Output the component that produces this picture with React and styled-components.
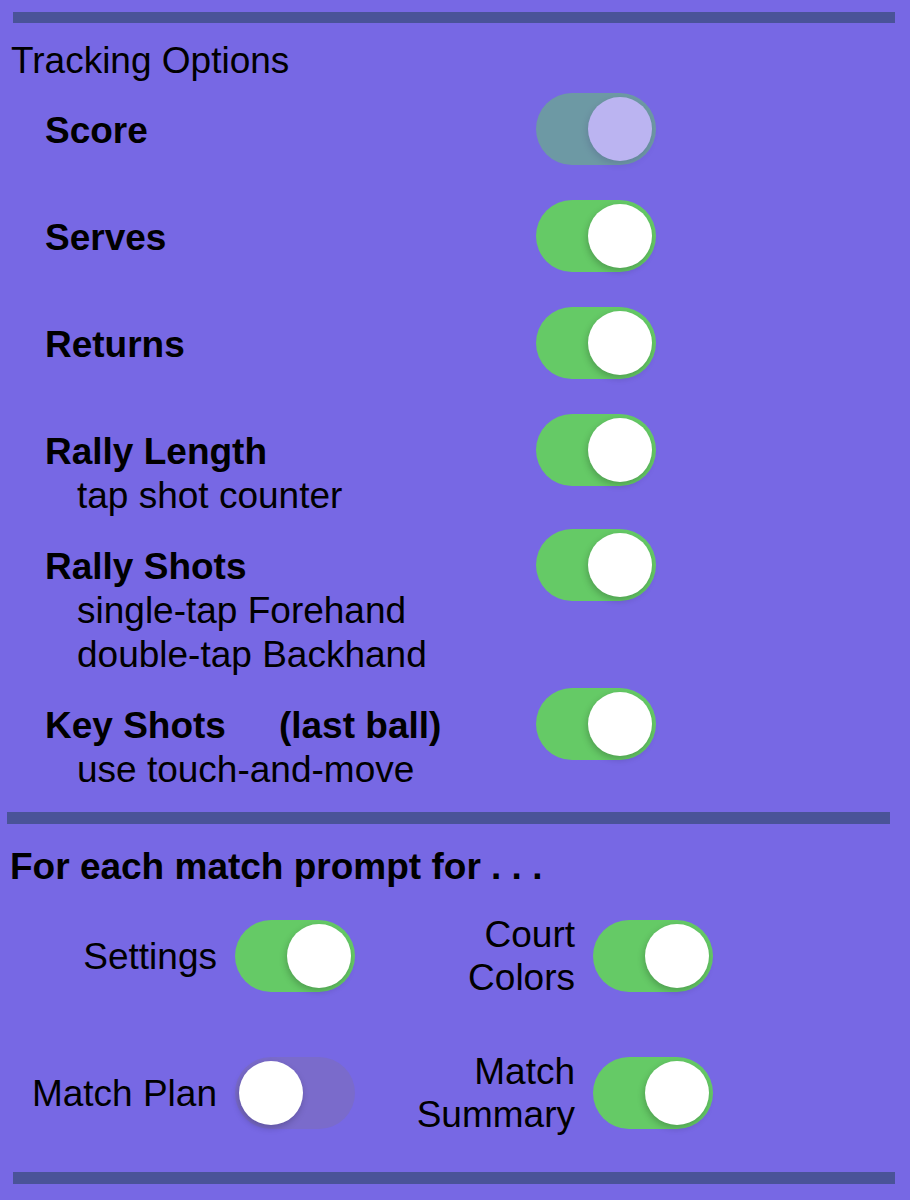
import React from 'react';
import styled, { createGlobalStyle } from 'styled-components';

const trackingOptions = [
  { title: 'Score', on: true, dim: true },
  { title: 'Serves', on: true },
  { title: 'Returns', on: true },
  { title: 'Rally Length', notes: ['tap shot counter'], on: true },
  { title: 'Rally Shots', notes: ['single-tap Forehand', 'double-tap Backhand'], on: true },
  { title: 'Key Shots', aside: '(last ball)', notes: ['use touch-and-move'], on: true },
];

const prompts = [
  { label: ['Settings'], on: true },
  { label: ['Court', 'Colors'], on: true },
  { label: ['Match Plan'], on: false },
  { label: ['Match', 'Summary'], on: true },
];

const Switch = ({ on, dim }) => (
  <Track $on={on} $dim={dim}>
    <Knob $on={on} />
  </Track>
);

const App = () => {
  return (
    <>
      <GlobalStyle />
      <Page>
        <Divider $left={13} $right={15} $height={11} />
        <SectionTitle>Tracking Options</SectionTitle>

        <OptionList>
          {trackingOptions.map((opt) => (
            <OptionRow key={opt.title}>
              <OptionText>
                <OptionTitle>
                  {opt.title}
                  {opt.aside && <Aside>{opt.aside}</Aside>}
                </OptionTitle>
                {opt.notes?.map((note) => (
                  <Note key={note}>{note}</Note>
                ))}
              </OptionText>
              <SwitchSlot>
                <Switch on={opt.on} dim={opt.dim} />
              </SwitchSlot>
            </OptionRow>
          ))}
        </OptionList>

        <Divider $left={7} $right={20} $height={12} $top={9} />
        <PromptTitle>For each match prompt for . . .</PromptTitle>

        <PromptGrid>
          {prompts.map((p) => (
            <PromptCell key={p.label.join(' ')}>
              <PromptLabel>
                {p.label.map((line) => (
                  <div key={line}>{line}</div>
                ))}
              </PromptLabel>
              <Switch on={p.on} />
            </PromptCell>
          ))}
        </PromptGrid>

        <Divider $left={13} $right={15} $height={12} $top={36} />
      </Page>
    </>
  );
};

export default App;

//
// Styled Components
//

const GlobalStyle = createGlobalStyle`
  html, body {
    margin: 0;
    padding: 0;
    background: #7768e4;
  }
  body {
    font-family: "Liberation Sans", Arial, Helvetica, sans-serif;
    color: #000;
  }
`;

const Page = styled.div`
  width: 910px;
  min-height: 1200px;
  padding-top: 12px;
  box-sizing: border-box;
  background: #7768e4;
`;

const Divider = styled.div`
  height: ${(p) => p.$height}px;
  margin: ${(p) => p.$top || 0}px ${(p) => p.$right}px 0 ${(p) => p.$left}px;
  background: #4a5398;
`;

const SectionTitle = styled.div`
  margin-top: 16px;
  padding-left: 11px;
  font-size: 37px;
  line-height: 44px;
`;

const OptionList = styled.div`
  margin-top: 10px;
`;

const OptionRow = styled.div`
  display: flex;
  align-items: flex-start;
  min-height: 107px;
  padding: 14px 0 11px 45px;
  box-sizing: border-box;
`;

const OptionText = styled.div`
  width: 491px;
  padding-top: 2px;
  font-size: 37px;
`;

const OptionTitle = styled.div`
  font-weight: bold;
  line-height: 44px;
  white-space: nowrap;
`;

const Aside = styled.span`
  margin-left: 53px;
`;

const Note = styled.div`
  padding-left: 32px;
  line-height: 44px;
`;

const SwitchSlot = styled.div`
  height: 44px;
  display: flex;
  align-items: center;
`;

const Track = styled.div`
  position: relative;
  flex: none;
  width: 120px;
  height: 72px;
  border-radius: 36px;
  background: ${(p) => (p.$on ? '#65ca66' : '#7a6bcb')};
  opacity: ${(p) => (p.$dim ? 0.5 : 1)};
`;

const Knob = styled.div`
  position: absolute;
  top: 4px;
  left: ${(p) => (p.$on ? '52px' : '4px')};
  width: 64px;
  height: 64px;
  border-radius: 50%;
  background: #fff;
  box-shadow: -1px 3px 7px rgba(0, 0, 0, 0.22);
`;

const PromptTitle = styled.div`
  margin-top: 21px;
  padding-left: 10px;
  font-size: 37px;
  font-weight: bold;
  line-height: 44px;
`;

const PromptGrid = styled.div`
  display: grid;
  grid-template-columns: 355px 358px;
  grid-auto-rows: 86px;
  row-gap: 51px;
  margin-top: 24px;
`;

const PromptCell = styled.div`
  display: flex;
  justify-content: flex-end;
  align-items: center;
  gap: 18px;
`;

const PromptLabel = styled.div`
  font-size: 37px;
  line-height: 43px;
  text-align: right;
  white-space: nowrap;
`;
